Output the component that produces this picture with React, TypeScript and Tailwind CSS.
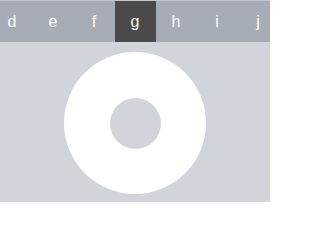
import React from "react";

const tabs = ["d", "e", "f", "g", "h", "i", "j"];

export default function App() {
  return (
    <div className="w-[270px] h-[202px] bg-[#d1d5db] overflow-hidden flex flex-col" style={{ fontFamily: '"Liberation Sans", Arial, sans-serif' }}>
      <div className="h-[42px] bg-[#a6adb7] border-t border-[#c3c8cf] flex justify-center overflow-hidden shrink-0">
        {tabs.map((t) => (
          <div
            key={t}
            className={`w-[41px] shrink-0 flex items-center justify-center text-[16px] text-white ${t === "g" ? "bg-[#4a4a4a]" : ""}`}
          >
            {t}
          </div>
        ))}
      </div>
      <div className="flex justify-center pt-[10px]">
        <div className="w-[142px] h-[142px] rounded-full bg-white flex items-center justify-center">
          <div className="w-[51px] h-[51px] rounded-full bg-[#d1d5db]" />
        </div>
      </div>
    </div>
  );
}
